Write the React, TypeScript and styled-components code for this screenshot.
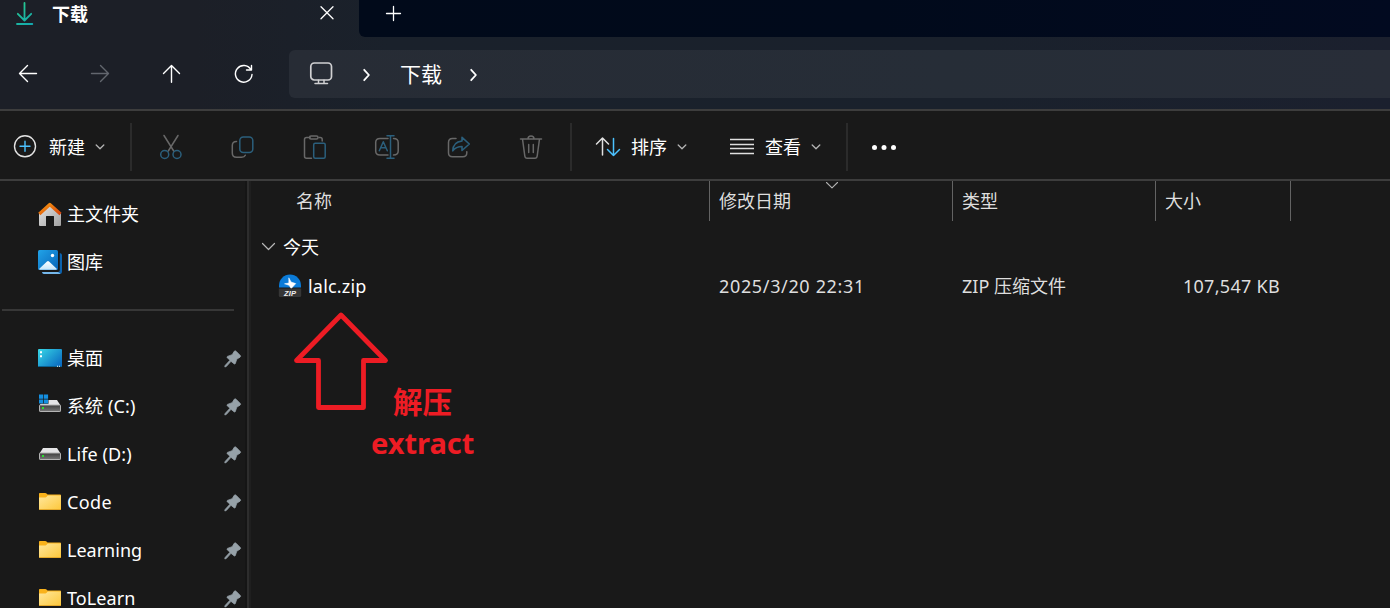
import React from "react";
import styled, { createGlobalStyle } from "styled-components";

const GlobalStyle = createGlobalStyle`
  *, *::before, *::after { box-sizing: border-box; }
  html, body { margin: 0; padding: 0; background: #191919; overflow: hidden; }
  body { font-family: "Noto Sans", "Noto Sans CJK SC", sans-serif; }
  svg { display: block; flex: none; overflow: visible; }
`;

const Window = styled.div`
  position: relative;
  width: 1390px;
  height: 608px;
  display: flex;
  flex-direction: column;
  overflow: hidden;
  background: #191919;
  color: #ffffff;
  font-size: 18px;
  line-height: 24px;
  white-space: nowrap;
`;

const Chrome = styled.header`
  flex: none;
  height: 111px;
  border-bottom: 2px solid #3d3d3d;
  background: linear-gradient(90deg, #1c1f27 0%, #1c1f27 14%, #1a212b 28%, #1a212c 70%, #1b202e 100%);
`;

const TabStrip = styled.div`
  display: flex;
  height: 37px;
`;

const Tab = styled.div`
  display: flex;
  align-items: flex-start;
  width: 359px;
  padding: 1px 25px 0 16px;
`;

const TabTitle = styled.span`
  flex: 1;
  margin: 1px 0 0 18px;
  font-weight: 700;
  letter-spacing: -0.1px;
`;

const TabRest = styled.div`
  flex: 1;
  padding: 6px 0 0 27px;
  border-bottom-left-radius: 6px;
  background: linear-gradient(90deg, #010a1a 0%, #010a1b 50%, #020a20 100%);
`;

const NavBar = styled.nav`
  display: flex;
  align-items: flex-start;
  padding-top: 13px;
`;

const NavButtons = styled.div`
  display: flex;
  width: 289px;
  padding: 14px 0 0 18px;
  gap: 52px;
`;

const AddressBar = styled.div`
  flex: 1;
  display: flex;
  align-items: center;
  height: 48px;
  padding-left: 20px;
  border-radius: 6px 0 0 6px;
  background: linear-gradient(90deg, #272c35 0%, #262d37 60%, #282d38 100%);
`;

const Spacer = styled.i`
  width: 30px;
`;

const Crumb = styled.span`
  margin: 0 28px 1px 29px;
  font-size: 21px;
  line-height: 28px;
`;

const Toolbar = styled.div`
  flex: none;
  display: flex;
  align-items: center;
  height: 70px;
  padding-top: 3px;
  border-bottom: 2px solid #3d3d3d;
`;

const Command = styled.div<{ $width: number; $pad: number; $gap: number }>`
  display: flex;
  align-items: center;
  width: ${(p) => p.$width}px;
  padding-left: ${(p) => p.$pad}px;

  & > span { margin: 1px 10px 0 ${(p) => p.$gap}px; }
`;

const Separator = styled.i`
  width: 2px;
  height: 48px;
  background: #2b2b2b;
`;

const IconGroup = styled.div`
  display: flex;
  padding: 0 3px;
`;

const IconButton = styled.div`
  display: flex;
  justify-content: center;
  width: 72px;
`;

const Body = styled.div`
  flex: 1;
  display: flex;
  min-height: 0;
`;

const Sidebar = styled.aside`
  flex: none;
  width: 251px;
  padding-top: 9px;
  border-right: 2px solid #1f1f1f;
  box-shadow: inset -2px 0 0 #2d2d2d, inset -4px 0 0 #151515;
`;

const SideRow = styled.div`
  display: flex;
  align-items: center;
  height: 48px;
  padding: 0 7px 0 37px;
`;

const SideLabel = styled.span<{ $track?: number }>`
  flex: 1;
  margin-left: 5px;
  letter-spacing: ${(p) => p.$track ?? 0}px;
`;

const SideDivider = styled.div`
  height: 48px;
  padding: 23px 15px 0 2px;

  &::before {
    content: "";
    display: block;
    height: 2px;
    background: #373737;
  }
`;

const PinIcon = styled.svg`
  margin-top: 1px;
`;

const Content = styled.main`
  flex: 1;
  min-width: 0;
`;

const columns = "459px 243px 203px 135px";

const HeaderRow = styled.div`
  display: grid;
  grid-template-columns: ${columns};
  height: 40px;
  color: #dedede;
`;

const HeaderCell = styled.div<{ $pad?: number }>`
  position: relative;
  padding: 8px 0 0 ${(p) => p.$pad ?? 9}px;
  border-right: 1px solid #636363;
`;

const SortMark = styled.svg`
  position: absolute;
  top: 1px;
  left: 115.5px;
`;

const GroupRow = styled.div`
  display: flex;
  align-items: center;
  height: 50px;
  padding: 1px 0 0 11px;

  & > span { margin-left: 8px; }
`;

const FileRow = styled.div`
  display: grid;
  grid-template-columns: ${columns};
  align-items: center;
  height: 30px;
  color: #dedede;
`;

const FileName = styled.div`
  display: flex;
  align-items: center;
  padding-left: 27px;
  color: #ffffff;

  & > span { margin-left: 6px; letter-spacing: 0.2px; }
`;

const FileCell = styled.div<{ $right?: boolean; $track?: number }>`
  padding: 0 ${(p) => (p.$right ? 11 : 0)}px 0 9px;
  text-align: ${(p) => (p.$right ? "right" : "left")};
  letter-spacing: ${(p) => p.$track ?? 0}px;
`;

const ArrowNote = styled.svg`
  position: absolute;
  left: 291px;
  top: 309px;
`;

const TextNote = styled.div`
  position: absolute;
  left: 371px;
  top: 380px;
  width: 103px;
  text-align: center;
  color: #ed1c24;
  font-weight: 700;
  font-size: 29px;
  line-height: 42px;

  & > :first-child { font-size: 29.5px; margin-top: 1px; margin-bottom: -1px; }
`;

const stroke = (color: string, width = 1.5) => ({
  fill: "none",
  stroke: color,
  strokeWidth: width,
  strokeLinecap: "round" as const,
  strokeLinejoin: "round" as const,
});

const GREY = "#686868";
const BLUE = "#2b5f7c";

const DownloadIcon = () => (
  <svg width="18" height="24" viewBox="0 0 18 24">
    <defs>
      <linearGradient id="dl" x1="0" y1="0" x2="18" y2="24" gradientUnits="userSpaceOnUse">
        <stop offset="0" stopColor="#2bd18b" />
        <stop offset="1" stopColor="#12a5b0" />
      </linearGradient>
    </defs>
    <path d="M8.5 2v17M1.800 12.800l6.700 6.700 6.700-6.700M1 23h15.300" {...stroke("url(#dl)", 1.8)} />
  </svg>
);

const SmallChevron = () => (
  <svg width="10" height="6" viewBox="0 0 10 6">
    <path d="M1.200 1l3.800 3.700L8.800 1" {...stroke("#b5b5b5", 1.3)} />
  </svg>
);

const CrumbChevron = () => (
  <svg width="8" height="14" viewBox="0 0 8 14">
    <path d="M1.200 2.800L5.900 8l-4.700 5.200" {...stroke("#ffffff", 1.8)} />
  </svg>
);

const Pin = () => (
  <PinIcon width="18" height="18" viewBox="0 0 18 18">
    <path
      d="M10.300 1.200q1-.7 1.800.1l4.200 4.300q.7.900-.3 1.600l-3.200 1.900-1.500 4.400q-.4 1-1.200.3L7 11.300 2.200 16.600l-1.400.3.300-1.400L6 10.200 3.200 7.700q-.7-.9.300-1.300l4.700-1.700z"
      fill="#96a1a8"
      stroke="#96a1a8"
      strokeWidth=".8"
      strokeLinejoin="round"
    />
  </PinIcon>
);

const HomeIcon = () => (
  <svg width="25" height="24" viewBox="0.5 0 25 24">
    <defs>
      <linearGradient id="wall" x1="0" y1="0" x2="1" y2="1">
        <stop offset="0" stopColor="#e6e6e6" />
        <stop offset="1" stopColor="#a2a2a2" />
      </linearGradient>
      <linearGradient id="roof" x1="0" y1="0" x2="1" y2="1">
        <stop offset="0" stopColor="#f99a11" />
        <stop offset="1" stopColor="#d6420c" />
      </linearGradient>
    </defs>
    <path d="M2.500 11.500L13.500 2l11 9.500V23q0 1-1 1h-6V14.500q0-.5-.5-.5h-7q-.5 0-.5.5V24h-6q-1 0-1-1z" fill="url(#wall)" />
    <path d="M2.800 12L13.300 2.500 24 12" fill="none" stroke="url(#roof)" strokeWidth="3.200" strokeLinejoin="round" />
  </svg>
);

const GalleryIcon = () => (
  <svg width="25" height="24" viewBox="0 0 25 24">
    <defs>
      <linearGradient id="gal" x1="0" y1="0" x2="1" y2="1">
        <stop offset="0" stopColor="#21a3e8" />
        <stop offset="1" stopColor="#0864b8" />
      </linearGradient>
      <linearGradient id="snow" x1="0" y1="0" x2="0" y2="1">
        <stop offset="0" stopColor="#ffffff" />
        <stop offset="1" stopColor="#c5e6fb" />
      </linearGradient>
    </defs>
    <path d="M22.800 3q2.200.5 2.200 2V21.500q0 2.500-2.500 2.500H7q-1.500 0-2-2h16q1.800 0 1.800-2z" fill="#0c62ad" />
    <path d="M5 22h16l2.500 1.600-1 .4H7q-1.500 0-2-2z" fill="#75b7ea" />
    <rect x="1" width="20" height="20" rx="1.500" fill="url(#gal)" />
    <path d="M2 19l8-7.500q1-1 2 0L20 19q-.3.800-1.200.8H3.200Q2.300 19.800 2 19z" fill="url(#snow)" />
    <circle cx="15.500" cy="5.500" r="1.700" fill="#fff" />
  </svg>
);

const DesktopIcon = () => (
  <svg width="25" height="18" viewBox="0 0 25 18">
    <defs>
      <linearGradient id="desk" x1="0" y1="0" x2="1" y2=".8">
        <stop offset="0" stopColor="#38d8e6" />
        <stop offset="1" stopColor="#0b6cc2" />
      </linearGradient>
    </defs>
    <rect x="1" width="24" height="18" rx="1" fill="url(#desk)" />
    <path d="M1 17h24q0 1-1 1H2q-1 0-1-1z" fill="#0a6190" />
    <path d="M3 2.300h2v2H3zM3 6.300h2v2H3zM20 16.800h1v1h-1zM22 16.800h1v1h-1z" fill="#fff" />
  </svg>
);

const DriveIcon = ({ system }: { system?: boolean }) => (
  <svg width="25" height="18" viewBox="0 0 25 18">
    <defs>
      <linearGradient id="drive" x1="0" y1="0" x2="0" y2="1">
        <stop offset="0" stopColor="#3e3e3e" />
        <stop offset="1" stopColor="#777" />
      </linearGradient>
    </defs>
    <path d="M6 3h14l3.500 5.500h-21z" fill="#e4e4e6" />
    <rect x="2.500" y="8" width="21" height="6.500" rx=".6" fill="url(#drive)" stroke="#b4b4b4" />
    <rect x="5" y="10" width="2" height="2" fill="#2be02f" />
    {system && (
      <g>
        <path d="M1.500 -3h10v9.800h-10z" fill="#191919" />
        <path d="M2-2.500h4.200v4.200H2zM6.900-2.500h4.200v4.200H6.900zM2 2.400h4.200v4.200H2zM6.900 2.400h4.200v4.200H6.900z" fill="#148fe0" />
      </g>
    )}
  </svg>
);

const FolderIcon = () => (
  <svg width="25" height="18" viewBox="0 0 25 18">
    <defs>
      <linearGradient id="folder" x1="0" y1="0" x2="1" y2="1">
        <stop offset="0" stopColor="#ffe79c" />
        <stop offset="1" stopColor="#fdc73a" />
      </linearGradient>
    </defs>
    <path d="M2 .700Q2 0 2.800 0h5.500q.7 0 1.200.5l1 1H23q1 0 1 .8v3H2z" fill="#f9b21b" />
    <path d="M2 4.500h6.500q.5 0 .9-.4l1.400-1.600H24v13.500q0 1-1 1H3q-1 0-1-1z" fill="url(#folder)" />
    <path d="M2 16h22q0 1-1 1H3q-1 0-1-1z" fill="#e5a92a" />
  </svg>
);

const ZipIcon = () => (
  <svg width="24" height="24" viewBox="0 0 24 24">
    <path d="M1 13.500V11.500a11 11 0 0 1 22 0v2z" fill="#0b7bd8" />
    <path d="M10.800 3.800l2.300 4.200 4.700 1.600-4.600 5-2.200-3.400-4.500-1.400 4.300-.8z" fill="#fff" stroke="#fff" strokeWidth=".5" strokeLinejoin="round" />
    <path d="M.8 14.500h22.400v7q0 1.500-1.500 1.500H2.300Q.8 23 .8 21.500z" fill="#363636" />
    <text x="12" y="21.600" textAnchor="middle" fontFamily="Liberation Sans" fontSize="7.500" fontWeight="700" fontStyle="italic" fill="#eee" textLength="12">ZIP</text>
  </svg>
);

const toolIcons = [
  <svg key="cut" width="24" height="26" viewBox="0 0 24 26">
    <path d="M5 1.500l9.700 15.500M19 1.500L9.300 17" {...stroke(GREY)} />
    <circle cx="5.700" cy="20.500" r="4" {...stroke(BLUE)} />
    <circle cx="18" cy="20.500" r="4" {...stroke(BLUE)} />
  </svg>,
  <svg key="copy" width="24" height="26" viewBox="0 0 24 26">
    <path d="M5.500 7.500Q1.300 7.500 1.300 11.500v7.500q0 4.300 4.200 4.300h5q3 0 3.800-2" {...stroke(GREY)} />
    <rect x="8.800" y="3" width="13" height="15.500" rx="3.500" {...stroke(BLUE)} />
  </svg>,
  <svg key="paste" width="24" height="26" viewBox="0 0 24 26">
    <path d="M7 3.500H3.500Q1.500 3.500 1.500 5.500v16.700q0 2 2 2H8.500M16 3.500h1.200q2 0 2 2V7" {...stroke(GREY)} />
    <rect x="6.500" y="2" width="8.500" height="3" rx="1.500" {...stroke(GREY)} />
    <rect x="10.700" y="9.200" width="11.500" height="15" rx="1.500" {...stroke(BLUE)} />
  </svg>,
  <svg key="rename" width="24" height="26" viewBox="0 0 24 26">
    <path d="M13 4.600H5Q.7 4.600.7 8.600v8.500q0 4 4.300 4h8M18.500 4.600q4.700 0 4.700 4v8.500q0 4-4.700 4" {...stroke(GREY)} />
    <path d="M12 1.800h7M12 24.200h7M15.500 1.800v22.400M4.300 16.800L8.300 7.800l4 9M5.700 13.800h5.200" {...stroke(BLUE)} />
  </svg>,
  <svg key="share" width="24" height="26" viewBox="0 0 24 26">
    <path d="M9 4.500H5.500Q1.500 4.500 1.500 8.500v10.300q0 4 4 4h10.300q4 0 4-4v-1" {...stroke(GREY)} />
    <path d="M15 3.300l7.300 6.700-7.300 6.500v-4q-6 0-9.200 4.300Q6 8 15 7z" {...stroke(BLUE, 1.6)} />
  </svg>,
  <svg key="delete" width="24" height="26" viewBox="0 0 24 26">
    <path d="M1.500 5h21M3.500 5l2.300 17q.3 2.200 2.300 2.200h7.800q2 0 2.300-2.200l2.300-17M9 5q0-3 3-3t3 3M9.700 10.500v8M14.300 10.500v8" {...stroke(GREY)} />
  </svg>,
];

const places: { label: string; icon: React.ReactNode; track?: number }[] = [
  { label: "桌面", icon: <DesktopIcon /> },
  { label: "系统 (C:)", icon: <DriveIcon system />, track: 0.1 },
  { label: "Life (D:)", icon: <DriveIcon />, track: 0.1 },
  { label: "Code", icon: <FolderIcon />, track: 0.4 },
  { label: "Learning", icon: <FolderIcon /> },
  { label: "ToLearn", icon: <FolderIcon />, track: 0.1 },
];

export default function App() {
  return (
    <>
      <GlobalStyle />
      <Window>
        <Chrome>
          <TabStrip>
            <Tab>
              <DownloadIcon />
              <TabTitle>下载</TabTitle>
              <svg width="14" height="24" viewBox="0 0 14 24">
                <path d="M1 5.700l12 12M13 5.700l-12 12" {...stroke("#fff", 1.3)} />
              </svg>
            </Tab>
            <TabRest>
              <svg width="15" height="15" viewBox="0 0 15 15">
                <path d="M7.500.5v14M.5 7.500h14" {...stroke("#fff", 1.3)} />
              </svg>
            </TabRest>
          </TabStrip>
          <NavBar>
            <NavButtons>
              <svg width="20" height="20" viewBox="0 0 20 20">
                <path d="M18.500 9.500H1.500M9.500 1.500l-8 8 8 8" {...stroke("#fff", 1.4)} />
              </svg>
              <svg width="20" height="20" viewBox="0 0 20 20">
                <path d="M1.500 9.500h17M10.500 1.500l8 8-8 8" {...stroke("#62666e", 1.4)} />
              </svg>
              <svg width="20" height="20" viewBox="0 0 20 20">
                <path d="M9.500 18.300V1.500M1.500 9.500l8-8 8 8" {...stroke("#fff", 1.4)} />
              </svg>
              <svg width="20" height="20" viewBox="0 0 20 20">
                <path d="M16.800 5.500A8.300 8.300 0 1 0 18 10.500M17.500 1.500v4.500h-5" {...stroke("#fff", 1.4)} />
              </svg>
            </NavButtons>
            <AddressBar>
              <svg width="24" height="24" viewBox="0 0 24 24">
                <rect x="1.800" y="1" width="20.700" height="17" rx="3.500" {...stroke("#d0d0d2", 1.7)} />
                <path d="M9.500 18.200v3M15 18.200v3M6 21.500h12.500" {...stroke("#d0d0d2", 1.5)} />
              </svg>
              <Spacer />
              <CrumbChevron />
              <Crumb>下载</Crumb>
              <CrumbChevron />
            </AddressBar>
          </NavBar>
        </Chrome>
        <Toolbar>
          <Command $width={130} $pad={13} $gap={12}>
            <svg width="24" height="24" viewBox="0 0 24 24">
              <circle cx="12" cy="11.300" r="10.500" {...stroke("#e2e2e2", 1.4)} />
              <path d="M12 6.300v10M7 11.300h10" {...stroke("#4cc2ff", 1.4)} />
            </svg>
            <span>新建</span>
            <SmallChevron />
          </Command>
          <Separator />
          <IconGroup>
            {toolIcons.map((icon, i) => (
              <IconButton key={i}>{icon}</IconButton>
            ))}
          </IconGroup>
          <Separator />
          <Command $width={134} $pad={23} $gap={10}>
            <svg width="26" height="24" viewBox="0 0 26 24">
              <path d="M7.500 20V3.500M1.500 9l6-6 6 6" {...stroke("#e0e0e0", 1.5)} />
              <path d="M18.500 3.500v17M12.500 14.500l6 6 6-6" {...stroke("#4cc2ff", 1.5)} />
            </svg>
            <span>排序</span>
            <SmallChevron />
          </Command>
          <Command $width={140} $pad={24} $gap={11}>
            <svg width="24" height="24" viewBox="0 0 24 24">
              <path d="M0 4.500h24M0 9.500h24M0 13.500h24M0 18.500h24" stroke="#e0e0e0" strokeWidth="1.300" />
            </svg>
            <span>查看</span>
            <SmallChevron />
          </Command>
          <Separator />
          <Command $width={60} $pad={24} $gap={0}>
            <svg width="26" height="24" viewBox="0 0 26 24">
              <circle cx="2.500" cy="12.500" r="2.500" fill="#fff" />
              <circle cx="12" cy="12.500" r="2.500" fill="#fff" />
              <circle cx="21.500" cy="12.500" r="2.500" fill="#fff" />
            </svg>
          </Command>
        </Toolbar>
        <Body>
          <Sidebar>
            <SideRow>
              <HomeIcon />
              <SideLabel>主文件夹</SideLabel>
            </SideRow>
            <SideRow>
              <GalleryIcon />
              <SideLabel>图库</SideLabel>
            </SideRow>
            <SideDivider />
            {places.map((p) => (
              <SideRow key={p.label}>
                {p.icon}
                <SideLabel $track={p.track}>{p.label}</SideLabel>
                <Pin />
              </SideRow>
            ))}
          </Sidebar>
          <Content>
            <HeaderRow>
              <HeaderCell $pad={45}>名称</HeaderCell>
              <HeaderCell>
                修改日期
                <SortMark width="12" height="7" viewBox="0 0 12 7">
                  <path d="M.5.500L6 5.800 11.500.500" {...stroke("#b0b0b0", 1.1)} />
                </SortMark>
              </HeaderCell>
              <HeaderCell>类型</HeaderCell>
              <HeaderCell>大小</HeaderCell>
            </HeaderRow>
            <GroupRow>
              <svg width="13" height="8" viewBox="0 0 13 8">
                <path d="M.5.500l6 6 6-6" {...stroke("#b8b8b8", 1.2)} />
              </svg>
              <span>今天</span>
            </GroupRow>
            <FileRow>
              <FileName>
                <ZipIcon />
                <span>lalc.zip</span>
              </FileName>
              <FileCell $track={0.65}>2025/3/20 22:31</FileCell>
              <FileCell>ZIP 压缩文件</FileCell>
              <FileCell $right $track={0.3}>107,547 KB</FileCell>
            </FileRow>
          </Content>
        </Body>
        <ArrowNote width="100" height="104" viewBox="0 0 100 104">
          <path
            d="M50 6l44.500 45.500h-22v47h-45v-47H5.500z"
            fill="none"
            stroke="#ed1c24"
            strokeWidth="4.800"
            strokeLinejoin="round"
          />
        </ArrowNote>
        <TextNote>
          <div>解压</div>
          <div>extract</div>
        </TextNote>
      </Window>
    </>
  );
}
